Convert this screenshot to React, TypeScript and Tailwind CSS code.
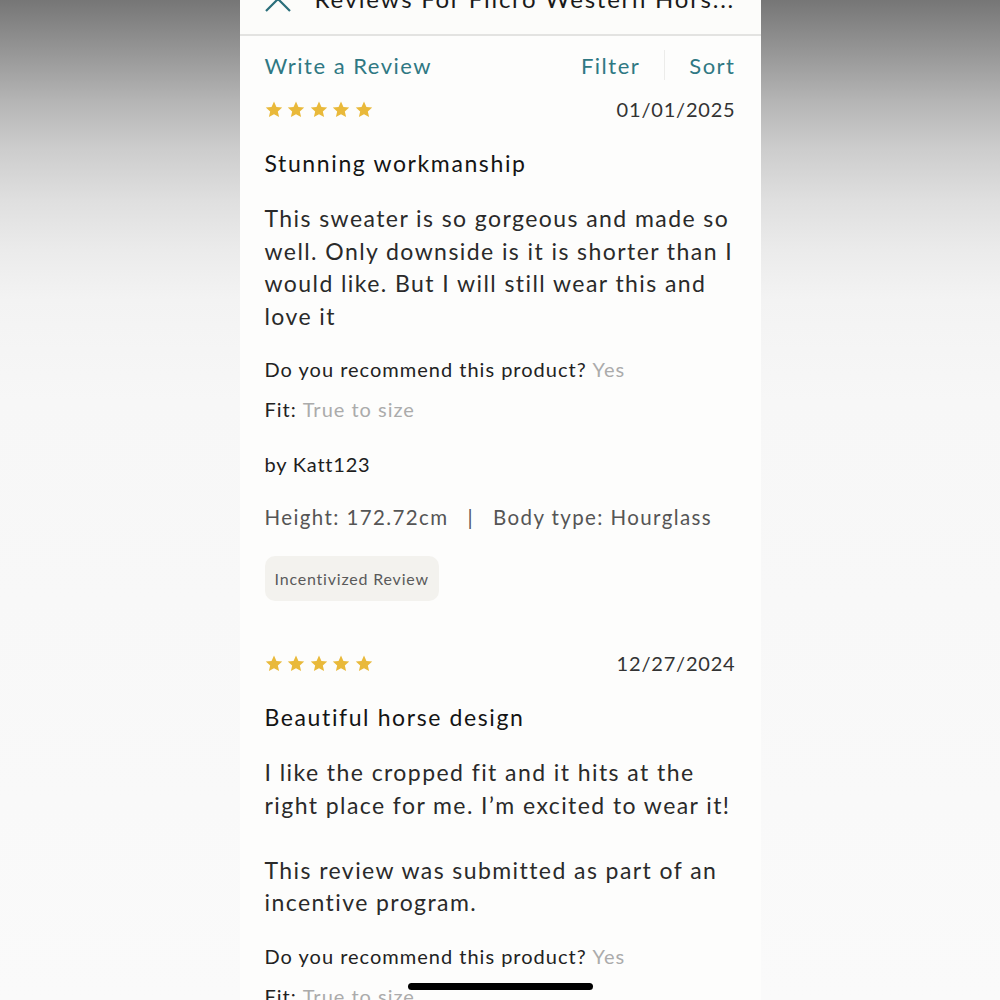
import React from 'react'

const font = { fontFamily: 'Lato, "Noto Sans", sans-serif' }

function Stars() {
  return (
    <div className="flex gap-[4.5px]">
      {[0, 1, 2, 3, 4].map(i => (
        <svg key={i} width="18" height="17" viewBox="0 0 24 23">
          <path d="M12 0.8l3.3 7.2 7.8 0.8-5.9 5.3 1.7 7.7L12 17.8l-6.9 4 1.7-7.7L0.9 8.8l7.8-0.8z" fill="#e9b93a" />
        </svg>
      ))}
    </div>
  )
}

function Review(props: {
  date: string
  title: string
  body: React.ReactNode
  children?: React.ReactNode
}) {
  return (
    <div className="flex flex-col">
      <div className="flex items-center justify-between h-[30px]">
        <Stars />
        <span className="text-[20px] text-[#333] tracking-[0.04em]">{props.date}</span>
      </div>
      <h3 className="mt-[24px] text-[23px] leading-[30px] font-normal text-[#141414] tracking-[0.07em]">{props.title}</h3>
      <div className="mt-[24px] -mr-[8px] text-[23px] leading-[32.5px] text-[#2a2a2a] tracking-[0.062em]">{props.body}</div>
      {props.children}
    </div>
  )
}

function Meta() {
  return (
    <div className="mt-[17px] flex flex-col text-[20px] text-[#222] tracking-[0.05em]">
      <div className="h-[40px] flex items-center">
        Do you recommend this product?<span className="ml-[6px] text-[#ababab]">Yes</span>
      </div>
      <div className="h-[40px] flex items-center">
        Fit:<span className="ml-[6px] text-[#ababab]">True to size</span>
      </div>
    </div>
  )
}

export default function App() {
  return (
    <div
      className="relative w-[1000px] h-[1000px] overflow-hidden flex justify-center bg-[linear-gradient(to_bottom,#767676_0px,#959595_50px,#b4b4b4_100px,#cdcdcd_150px,#dfdfdf_200px,#ebebeb_250px,#f3f3f3_300px,#f7f7f7_400px,#fafafa_100%)]"
      style={font}
    >
      <div className="w-[521px] h-full bg-[#fdfdfc] flex flex-col overflow-hidden">
        {/* top bar, scrolled partly out of view */}
        <div className="h-[36px] shrink-0 bg-[#fcfcfa] border-b-2 border-[#e3e3e1] overflow-hidden">
          <div className="-mt-[19px] flex items-center h-[36px] px-[25px]">
            <svg width="26" height="26" viewBox="0 0 26 26" className="shrink-0">
              <path d="M1 1l24 24M25 1L1 25" stroke="#2b6f7b" strokeWidth="2.2" fill="none" />
            </svg>
            <span className="ml-[24px] text-[24px] text-[#1a1a1a] tracking-[0.073em] whitespace-nowrap">Reviews For Filcro Western Hors...</span>
          </div>
        </div>

        <div className="flex-1 px-[25px]">
          <div className="flex items-center justify-between h-[58px] text-[22px] text-[#2f7883] tracking-[0.068em]">
            <span>Write a Review</span>
            <div className="flex items-center">
              <span>Filter</span>
              <span className="ml-[24px] mr-[24px] w-px h-[30px] bg-[#ececea]" />
              <span>Sort</span>
            </div>
          </div>

          <Review
            date="01/01/2025"
            title="Stunning workmanship"
            body={<p>This sweater is so gorgeous and made so well. Only downside is it is shorter than I would like. But I will still wear this and love it</p>}
          >
            <Meta />
            <div className="mt-[20px] text-[20px] text-[#1e1e1e] tracking-[0.04em] h-[30px] flex items-center">by Katt123</div>
            <div className="mt-[23px] text-[20.5px] text-[#555] tracking-[0.068em] h-[30px] flex items-center">
              Height: 172.72cm<span className="mx-[19px]">|</span>Body type: Hourglass
            </div>
            <div className="mt-[24px] self-start h-[45px] px-[10px] flex items-center rounded-[10px] bg-[#f3f2ee] text-[16px] text-[#5a5a5a] tracking-[0.05em]">
              Incentivized Review
            </div>
          </Review>

          <div className="mt-[47px]">
            <Review
              date="12/27/2024"
              title="Beautiful horse design"
              body={
                <>
                  <p>I like the cropped fit and it hits at the right place for me. I’m excited to wear it!</p>
                  <p className="mt-[32.5px]">This review was submitted as part of an incentive program.</p>
                </>
              }
            >
              <Meta />
            </Review>
          </div>
        </div>
      </div>

      {/* home indicator */}
      <div className="absolute left-[408px] top-[983px] w-[185px] h-[7px] rounded-full bg-black" />
    </div>
  )
}
